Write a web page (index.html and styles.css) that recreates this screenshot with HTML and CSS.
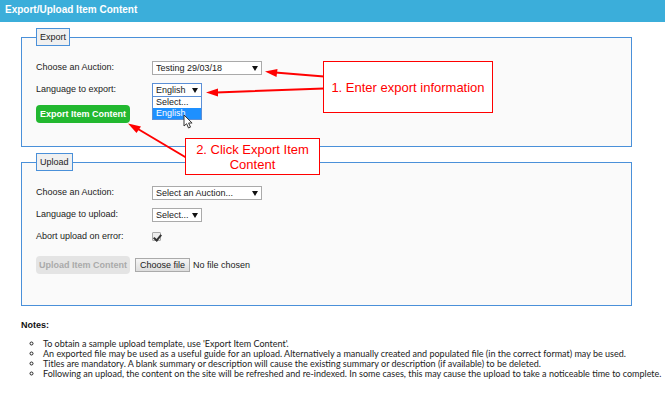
FILE: index.html
```html
<!DOCTYPE html>
<html lang="en">
<head>
  <meta charset="UTF-8" />
  <meta name="viewport" content="width=device-width, initial-scale=1.0"/>
  <title>Export/Upload Item Content</title>
  <link rel="stylesheet" href="styles.css">
</head>
<body>
  <h1>Export/Upload Item Content</h1>
  <main>
    <form>
      <fieldset class="export">
        <legend>Export</legend>
        <div class="row">
          <label for="export-auction">Choose an Auction:</label>
          <div class="select wide">
            <select id="export-auction">
              <option>Testing 29/03/18</option>
            </select>
          </div>
        </div>
        <div class="row">
          <label for="export-language">Language to export:</label>
          <div class="select open">
            <select id="export-language">
              <option>Select...</option>
              <option selected>English</option>
            </select>
            <ul class="options">
              <li>Select...</li>
              <li class="active">English</li>
            </ul>
            <svg class="cursor" width="11" height="16" viewBox="0 0 11 16">
              <path d="M1 1v11l2.600-2.300 1.900 4.300 2-.9-1.900-4.100h3.500z" fill="#fff" stroke="#333"/>
            </svg>
          </div>
        </div>
        <div class="actions">
          <button type="button" class="btn">Export Item Content</button>
        </div>
      </fieldset>

      <fieldset class="upload">
        <legend>Upload</legend>
        <div class="row">
          <label for="upload-auction">Choose an Auction:</label>
          <div class="select wide">
            <select id="upload-auction">
              <option>Select an Auction...</option>
            </select>
          </div>
        </div>
        <div class="row">
          <label for="upload-language">Language to upload:</label>
          <div class="select">
            <select id="upload-language">
              <option>Select...</option>
            </select>
          </div>
        </div>
        <div class="row">
          <label for="abort">Abort upload on error:</label>
          <input type="checkbox" id="abort" checked />
        </div>
        <div class="actions">
          <button type="submit" class="btn" disabled>Upload Item Content</button>
          <input type="file" id="file" class="file-input" />
          <label for="file" class="file-btn">Choose file</label>
          <span>No file chosen</span>
        </div>
      </fieldset>
    </form>

    <h2>Notes:</h2>
    <ul class="notes">
      <li>To obtain a sample upload template, use 'Export Item Content'.</li>
      <li>An exported file may be used as a useful guide for an upload. Alternatively a manually created and populated file (in the correct format) may be used.</li>
      <li>Titles are mandatory. A blank summary or description will cause the existing summary or description (if available) to be deleted.</li>
      <li>Following an upload, the content on the site will be refreshed and re-indexed. In some cases, this may cause the upload to take a noticeable time to complete.</li>
    </ul>
  </main>

  <!-- Help callouts -->
  <svg class="arrows" width="330" height="175" viewBox="0 0 330 175">
    <g stroke="#f00" stroke-width="2">
      <path d="M324 76.500L275 72.500M324 88.500L216 92.500M186 157.500L138 129"/>
    </g>
    <g fill="#f00">
      <path d="M265 71.500l12.500-2.500-1 8z"/>
      <path d="M206 92.500l12-4v8z"/>
      <path d="M128 123.500l13 3-4.500 6.500z"/>
    </g>
  </svg>
  <div class="callout step-one">1. Enter export information</div>
  <div class="callout step-two">2. Click Export Item Content</div>
</body>
</html>
```
FILE: styles.css
```css
* {
  box-sizing: border-box;
}
body {
  margin: 0;
  position: relative;
  background-color: #fff;
  color: #222;
  font-family: 'Liberation Sans', Arial, sans-serif;
  font-size: 9px;
  line-height: 10px;
}
h1 {
  margin: 0;
  padding: 4px 5px 6px;
  background-color: #3baeda;
  color: #fff;
  font-size: 10px;
  line-height: 12px;
}
main {
  padding: 6px 33px 0 21px;
}
fieldset {
  margin: 0 0 6px;
  padding: 11px 14px 0;
  border: 1px solid #4a90d9;
  background-color: #fafafa;
}
.export {
  min-height: 119px;
}
.upload {
  min-height: 153px;
}
legend {
  padding: 3px;
  border: 1px solid #4a90d9;
  background-color: #f0f0f0;
}
.row {
  display: flex;
  align-items: center;
  height: 22px;
}
.row label {
  width: 116px;
  padding-bottom: 2px;
}
.select {
  position: relative;
  width: 50px;
}
.select.wide {
  width: 110px;
}
.select::after {
  content: "";
  position: absolute;
  top: 5px;
  right: 4px;
  border: 3px solid transparent;
  border-top: 5px solid #111;
  border-bottom: 0;
}
select {
  display: block;
  width: 100%;
  height: 14px;
  padding: 0 3px;
  appearance: none;
  border: 1px solid #aaa;
  border-radius: 0;
  background-color: #fff;
  color: #222;
  font: inherit;
}
.open select {
  border-color: #5b8fd6;
}
.options {
  position: absolute;
  top: 13px;
  left: 0;
  width: 100%;
  margin: 0;
  padding: 0;
  list-style: none;
  border: 1px solid #5b8fd6;
  background-color: #fff;
}
.options li {
  padding: 0 3px 1px;
}
.options .active {
  background-color: #1e90ff;
  color: #fff;
}
.cursor {
  position: absolute;
  top: 31px;
  left: 31px;
}
input[type="checkbox"] {
  width: 9px;
  height: 9px;
  margin: 0 0 2px;
  appearance: none;
  border: 1px solid #aaa;
  border-radius: 1px;
  background-color: #eee;
}
input[type="checkbox"]:checked::before {
  content: "";
  display: block;
  width: 3px;
  height: 6px;
  margin-left: 2px;
  border: solid #333;
  border-width: 0 2px 2px 0;
  transform: rotate(40deg);
}
.actions {
  display: flex;
  align-items: center;
  margin-top: 4px;
}
.upload .actions {
  margin-top: 8px;
}
.btn {
  height: 18px;
  padding: 0 4px;
  border: none;
  border-radius: 4px;
  background-color: #22b830;
  color: #fff;
  font: inherit;
  font-weight: bold;
  cursor: pointer;
}
.btn:disabled {
  padding: 0 3px;
  background-color: #e4e4e4;
  color: #aaa;
  cursor: default;
}
.file-input {
  position: absolute;
  width: 1px;
  height: 1px;
  opacity: 0;
}
.file-btn {
  margin: 0 3px 0 5px;
  padding: 1px 4px;
  border: 1px solid #aaa;
  background: linear-gradient(#f6f6f6, #ddd);
}
h2 {
  margin: 14px 0 9px;
  font-size: 9px;
  line-height: 10px;
  color: #111;
}
.notes {
  margin: 0 -33px 0 0;
  padding-left: 22px;
  list-style: circle;
  font-family: Lato, Arial, sans-serif;
}
.arrows {
  position: absolute;
  top: 0;
  left: 0;
  pointer-events: none;
}
.callout {
  position: absolute;
  display: flex;
  align-items: center;
  justify-content: center;
  border: 1px solid #f00;
  background-color: #fff;
  color: #f00;
  font-size: 13px;
  line-height: 15px;
  text-align: center;
}
.step-one {
  top: 61px;
  left: 323px;
  width: 170px;
  height: 52px;
}
.step-two {
  top: 138px;
  left: 185px;
  width: 135px;
  height: 37px;
  padding: 0 8px;
}
```
